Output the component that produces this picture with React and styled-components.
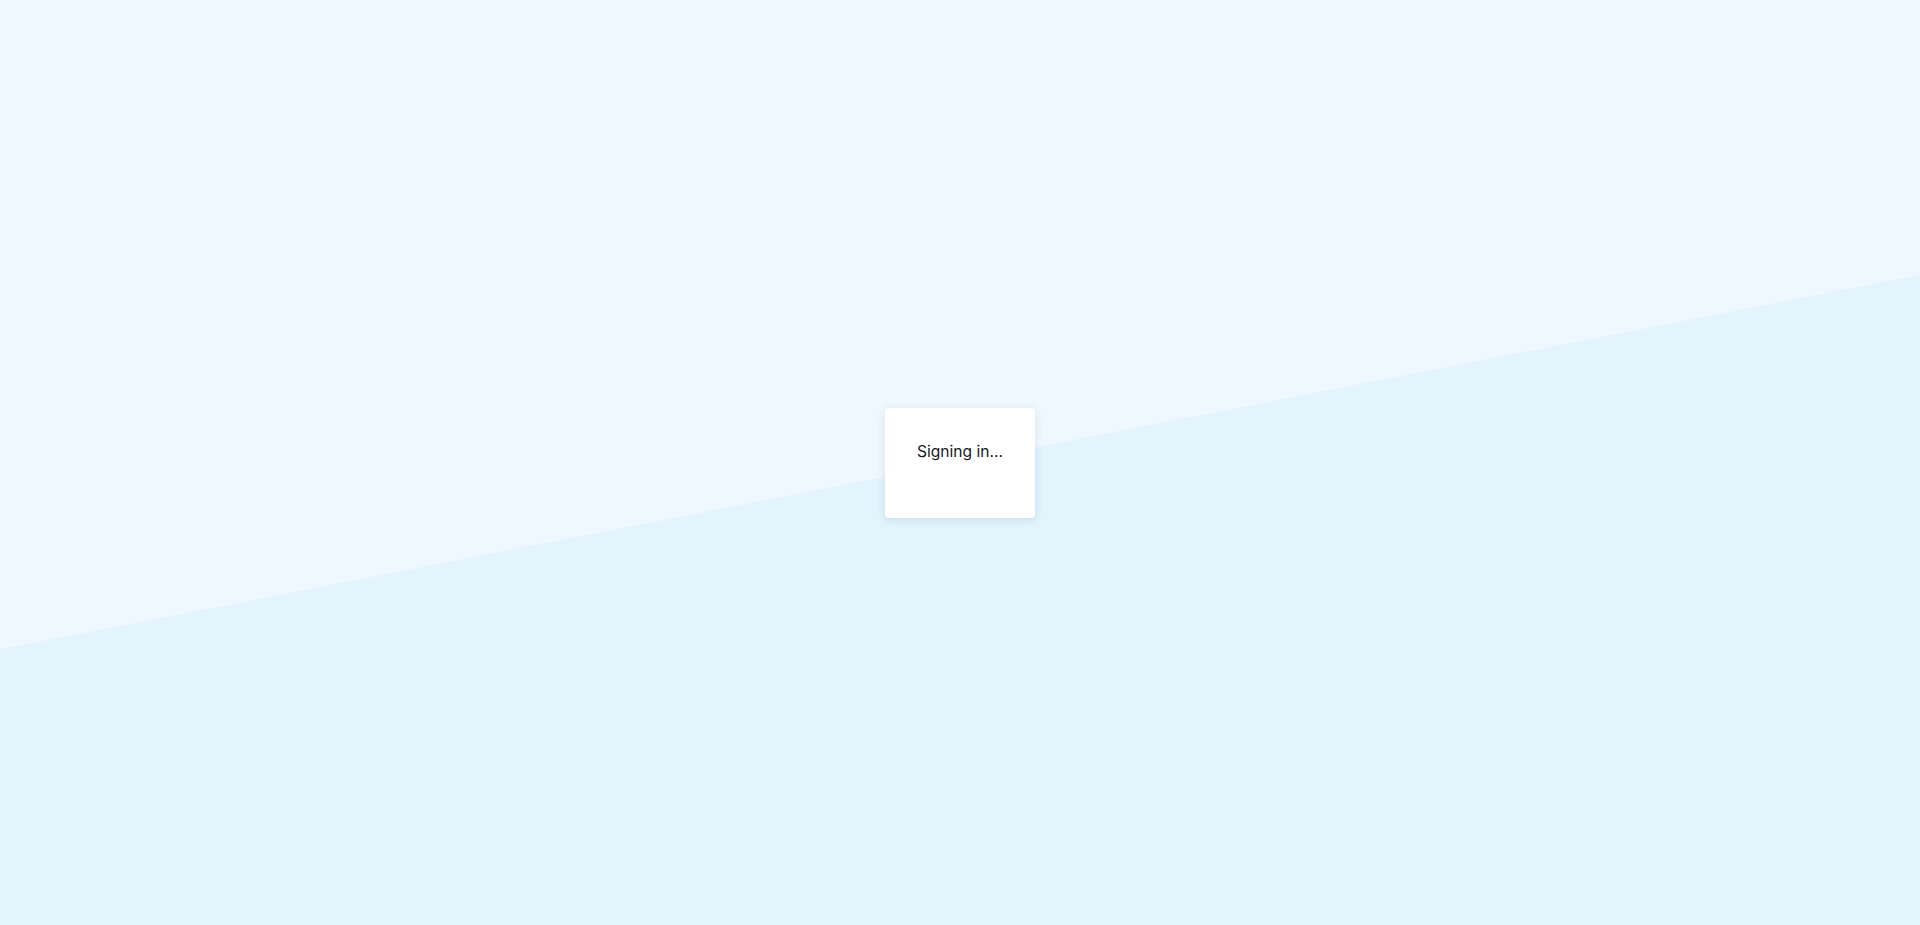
import styled, { createGlobalStyle } from "styled-components";

const GlobalStyle = createGlobalStyle`
    html, body {
        margin: 0;
        padding: 0;
    }
    body {
        font-family: Inter, "Noto Sans", sans-serif;
        color: #15191d;
    }
`

export default function App(){
    return(
        <Page>
            <GlobalStyle/>
            <Card>
                <Message>Signing in...</Message>
            </Card>
        </Page>
    )
}

const Page = styled.div`
    position: relative;
    width: 100%;
    height: 100vh;
    background: #eff8fe;
    display: flex;
    align-items: center;
    justify-content: center;
    overflow: hidden;

    &::before {
        content: "";
        position: absolute;
        inset: 0;
        background: #e3f4fc;
        clip-path: polygon(0 70.2%, 100% 29.7%, 100% 100%, 0 100%);
    }
`

const Card = styled.div`
    position: relative;
    box-sizing: border-box;
    width: 150px;
    height: 110px;
    padding: 32px 0 0;
    background: #ffffff;
    border-radius: 4px;
    box-shadow: 0 2px 8px rgba(30, 60, 90, 0.12);
    display: flex;
    flex-direction: column;
    align-items: center;
`

const Message = styled.p`
    margin: 0;
    font-size: 15.6px;
    line-height: 24px;
    font-weight: 400;
    color: #15191d;
`
